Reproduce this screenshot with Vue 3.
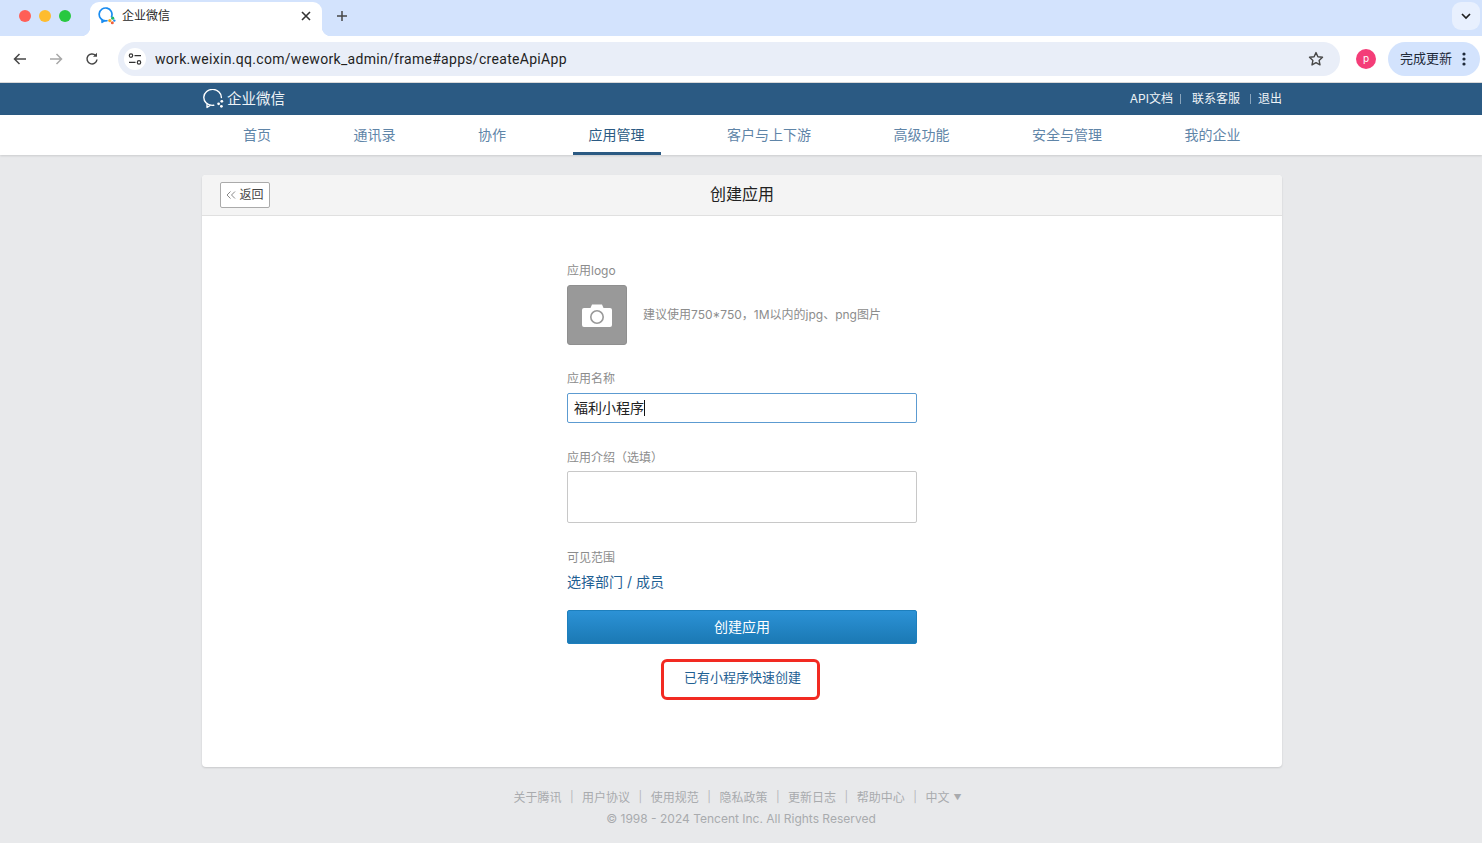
<script setup>
const navItems = ['首页', '通讯录', '协作', '应用管理', '客户与上下游', '高级功能', '安全与管理', '我的企业']
const footerLinks = ['关于腾讯', '用户协议', '使用规范', '隐私政策', '更新日志', '帮助中心']
</script>

<template>
  <div class="page">
    <div class="tabstrip">
      <div class="lights"><i class="l-red"></i><i class="l-yellow"></i><i class="l-green"></i></div>
      <div class="tab">
        <svg class="favicon" width="18" height="18" viewBox="0 0 18 18" fill="none">
          <path d="M13.6 9.600A6.400 6.400 0 1 0 7.600 13.800c.5 0 .9 0 1.300-.1" stroke="#1a8cf0" stroke-width="1.700" stroke-linecap="round"/>
          <path d="M4 12.300v3.200l2.800-1.900" stroke="#1a8cf0" stroke-width="1.500" stroke-linejoin="round"/>
          <circle cx="14.700" cy="11.200" r="1.600" fill="#20b86a"/>
          <circle cx="11.800" cy="13.600" r="1.600" fill="#f5a623"/>
          <circle cx="14.300" cy="15.800" r="1.500" fill="#f0603c"/>
          <circle cx="16.300" cy="13.600" r="1.200" fill="#1a8cf0"/>
        </svg>
        <span class="tab-title">企业微信</span>
        <svg class="tab-close" width="10" height="10" viewBox="0 0 10 10"><path d="M1 1l8 8M9 1l-8 8" stroke="#333" stroke-width="1.600"/></svg>
      </div>
      <svg class="plus" width="12" height="12" viewBox="0 0 12 12"><path d="M6 1v10M1 6h10" stroke="#474747" stroke-width="1.500"/></svg>
      <div class="tab-menu">
        <svg width="10" height="7" viewBox="0 0 10 7"><path d="M1 1l4 4 4-4" fill="none" stroke="#1f1f1f" stroke-width="1.700"/></svg>
      </div>
    </div>

    <div class="toolbar">
      <svg class="tool" width="16" height="16" viewBox="0 0 16 16" fill="none"><path d="M14 8H3M7.500 3L2.500 8l5 5" stroke="#474747" stroke-width="1.500"/></svg>
      <svg class="tool" width="16" height="16" viewBox="0 0 16 16" fill="none"><path d="M2 8h11M8.500 3l5 5-5 5" stroke="#a8a8a8" stroke-width="1.500"/></svg>
      <svg class="tool" width="16" height="16" viewBox="0 0 16 16" fill="none"><path d="M13 8.500A5 5 0 1 1 11.600 4.400" stroke="#474747" stroke-width="1.500"/><path d="M13 1.800v4h-4z" fill="#474747"/></svg>
      <div class="omnibox">
        <span class="tune">
          <svg width="14" height="12" viewBox="0 0 14 12" fill="none"><circle cx="3" cy="2.600" r="1.700" stroke="#333" stroke-width="1.200"/><path d="M6.500 2.600H13M1 9.400h6.500" stroke="#333" stroke-width="1.300"/><circle cx="11" cy="9.400" r="1.700" stroke="#333" stroke-width="1.200"/></svg>
        </span>
        <span class="url">work.weixin.qq.com/wework_admin/frame#apps/createApiApp</span>
        <svg class="star" width="16" height="16" viewBox="0 0 16 16" fill="none"><path d="M8 1.600l1.900 4.200 4.600.5-3.400 3.100.9 4.500L8 11.600l-4 2.300.9-4.500L1.500 6.300l4.600-.5z" stroke="#474747" stroke-width="1.400" stroke-linejoin="round"/></svg>
      </div>
      <span class="avatar">p</span>
      <div class="update">
        <span>完成更新</span>
        <svg width="4" height="14" viewBox="0 0 4 14"><circle cx="2" cy="2" r="1.600" fill="#1f2a3a"/><circle cx="2" cy="7" r="1.600" fill="#1f2a3a"/><circle cx="2" cy="12" r="1.600" fill="#1f2a3a"/></svg>
      </div>
    </div>

    <header class="topbar">
      <div class="topbar-inner">
        <div class="brand">
          <svg width="23" height="20" viewBox="0 0 23 20" fill="none">
            <path d="M19.400 8.600A8.800 8 0 1 0 10 16.400c.6 0 1.200 0 1.800-.1" stroke="#fff" stroke-width="1.400" stroke-linecap="round"/>
            <path d="M5 14.600v3.900l3.500-2.300" stroke="#fff" stroke-width="1.300" stroke-linejoin="round"/>
            <circle cx="19.800" cy="12.300" r="1.400" fill="#fff"/>
            <circle cx="16.600" cy="14.800" r="1.400" fill="#fff"/>
            <circle cx="19.400" cy="17.300" r="1.400" fill="#fff"/>
          </svg>
          <span>企业微信</span>
        </div>
        <div class="top-links">
          <span>API文档</span><i></i><span>联系客服</span><i class="wide"></i><span>退出</span>
        </div>
      </div>
    </header>

    <nav class="nav">
      <a v-for="item in navItems" :key="item" :class="{ active: item === '应用管理' }">{{ item }}</a>
    </nav>

    <main class="card">
      <div class="card-head">
        <button class="back">
          <svg width="10" height="8" viewBox="0 0 10 8" fill="none"><path d="M4.500.5L1 4l3.500 3.500M9 .5L5.500 4 9 7.500" stroke="#888" stroke-width="1"/></svg>
          <span>返回</span>
        </button>
        <h1>创建应用</h1>
      </div>
      <div class="form">
        <div class="label first">应用logo</div>
        <div class="logo-row">
          <div class="logo">
            <svg width="30" height="23" viewBox="0 0 30 23"><path fill-rule="evenodd" d="M2 4h6.500L10 .5h10L21.500 4H28a2 2 0 0 1 2 2v15a2 2 0 0 1-2 2H2a2 2 0 0 1-2-2V6a2 2 0 0 1 2-2zm13 2a7 7 0 1 0 0 14 7 7 0 0 0 0-14zm0 1.600a5.400 5.400 0 1 1 0 10.800 5.400 5.400 0 0 1 0-10.800z" fill="#fff"/></svg>
          </div>
          <span class="hint">建议使用750*750，1M以内的jpg、png图片</span>
        </div>
        <div class="label l-name">应用名称</div>
        <div class="input"><span>福利小程序</span><i class="caret"></i></div>
        <div class="label l-desc">应用介绍（选填）</div>
        <div class="textarea"></div>
        <div class="label l-scope">可见范围</div>
        <a class="select">选择部门 / 成员</a>
        <button class="submit">创建应用</button>
        <a class="quick">已有小程序快速创建</a>
      </div>
    </main>

    <footer class="footer">
      <div class="f-links">
        <template v-for="link in footerLinks" :key="link">
          <span>{{ link }}</span><b>|</b>
        </template>
        <span>中文</span><em>▼</em>
      </div>
      <div class="copy">© 1998 - 2024 Tencent Inc. All Rights Reserved</div>
    </footer>
  </div>
</template>

<style>
html, body { margin: 0; background: #e8e9eb; overflow: hidden; }
</style>

<style scoped>
.page {
  width: 1482px;
  height: 843px;
  overflow: hidden;
  background: #e8e9eb;
  font-family: "Inter", "Noto Sans CJK SC", sans-serif;
  line-height: 1.2;
  display: flex;
  flex-direction: column;
}
.tabstrip {
  height: 36px;
  flex: none;
  background: #d3e3fd;
  display: flex;
  align-items: flex-start;
  position: relative;
}
.lights { display: flex; gap: 8px; margin: 10px 0 0 19px; width: 71px; }
.lights i { width: 12px; height: 12px; border-radius: 50%; flex: none; }
.l-red { background: #ff5f57; }
.l-yellow { background: #febc2e; }
.l-green { background: #28c840; }
.tab {
  margin-top: 2px;
  width: 232px;
  height: 34px;
  background: #fff;
  border-radius: 9px 9px 0 0;
  display: flex;
  align-items: center;
  padding: 0 11px 6px 8px;
  box-sizing: border-box;
  position: relative;
}
.tab::before, .tab::after {
  content: "";
  position: absolute;
  bottom: 0;
  width: 9px;
  height: 9px;
}
.tab::before { left: -9px; background: radial-gradient(circle at 0 0, #d3e3fd 9px, #fff 9.500px); }
.tab::after { right: -9px; background: radial-gradient(circle at 100% 0, #d3e3fd 9px, #fff 9.500px); }
.tab-title { font-size: 12px; color: #1f1f1f; margin-left: 6px; flex: 1; }
.plus { margin: 10px 0 0 14px; }
.tab-menu {
  position: absolute;
  left: 1452px;
  top: 2px;
  width: 28px;
  height: 28px;
  border-radius: 9px;
  background: #e8f0fe;
  display: flex;
  align-items: center;
  justify-content: center;
}
.toolbar {
  height: 46px;
  flex: none;
  background: #fff;
  border-bottom: 1px solid #d9d9d9;
  display: flex;
  align-items: center;
  padding-left: 12px;
}
.tool { margin-right: 20px; flex: none; }
.tool:nth-child(3) { margin-right: 18px; }
.omnibox {
  width: 1222px;
  height: 34px;
  border-radius: 17px;
  background: #e9eef8;
  display: flex;
  align-items: center;
  padding: 0 16px 0 6px;
  box-sizing: border-box;
  flex: none;
}
.tune {
  width: 22px;
  height: 22px;
  border-radius: 50%;
  background: #fff;
  display: flex;
  align-items: center;
  justify-content: center;
  flex: none;
}
.url { font-size: 14px; color: #1f1f1f; margin-left: 9px; flex: 1; font-family: "Roboto", sans-serif; letter-spacing: .3px; }
.avatar {
  width: 20px;
  height: 20px;
  border-radius: 50%;
  background: #f43d78;
  color: #fff;
  font-size: 10px;
  line-height: 19px;
  text-align: center;
  margin-left: 16px;
  flex: none;
}
.update {
  width: 92px;
  height: 34px;
  margin-left: 12px;
  border-radius: 17px;
  background: #d3e3fd;
  display: flex;
  align-items: center;
  justify-content: space-between;
  padding: 0 14px 0 12px;
  box-sizing: border-box;
  font-size: 13px;
  color: #1f2a3a;
  flex: none;
}
.topbar { height: 32px; flex: none; background: #2b5a83; }
.topbar-inner {
  width: 1080px;
  height: 100%;
  margin-left: 202px;
  display: flex;
  align-items: center;
  justify-content: space-between;
  color: #fff;
}
.brand { display: flex; align-items: center; gap: 2px; font-size: 14.500px; color: #eef3f7; }
.top-links { display: flex; align-items: center; font-size: 12px; color: #eef3f7; }
.top-links i { width: 1px; height: 10px; background: #8aa5bd; margin: 0 11px 0 7px; }
.top-links i.wide { margin: 0 7px 0 10px; }
.nav {
  height: 40px;
  flex: none;
  background: #fff;
  box-shadow: 0 1px 2px rgba(0, 0, 0, .12);
  display: flex;
  gap: 50.500px;
  padding-left: 227px;
  box-sizing: border-box;
}
.nav a {
  padding: 0 16px;
  font-size: 14px;
  line-height: 39px;
  color: #5f85a8;
  height: 40px;
  box-sizing: border-box;
}
.nav a.active { color: #2b5a83; border-bottom: 3px solid #2b5a83; }
.card {
  width: 1080px;
  height: 592px;
  margin: 20px 0 0 202px;
  background: #fff;
  border-radius: 4px;
  box-shadow: 0 1px 2px rgba(0, 0, 0, .14);
  flex: none;
  overflow: hidden;
}
.card-head {
  height: 41px;
  box-sizing: border-box;
  background: #f4f4f4;
  border-bottom: 1px solid #e0e0e0;
  display: flex;
  align-items: center;
  justify-content: center;
  position: relative;
}
.card-head h1 { margin: 0; font-size: 16px; font-weight: 400; color: #222; }
.back {
  position: absolute;
  left: 18px;
  top: 7px;
  width: 50px;
  height: 26px;
  padding: 0;
  background: #fff;
  border: 1px solid #aaa;
  border-radius: 2px;
  display: flex;
  align-items: center;
  justify-content: center;
  gap: 3px;
  font: 12px/1.2 "Inter", "Noto Sans CJK SC", sans-serif;
  color: #444;
}
.form {
  width: 350px;
  margin: 0 auto;
  display: flex;
  flex-direction: column;
  align-items: flex-start;
}
.label { font-size: 12px; line-height: 16px; color: #8c8c8c; }
.first { margin-top: 47px; }
.logo-row { display: flex; align-items: center; margin-top: 6px; gap: 16px; }
.logo {
  width: 60px;
  height: 60px;
  background: #999;
  border: 1px solid #8f8f8f;
  border-radius: 3px;
  box-sizing: border-box;
  display: flex;
  align-items: center;
  justify-content: center;
}
.hint { font-size: 12px; color: #8c8c8c; }
.l-name { margin-top: 26px; }
.input {
  width: 350px;
  height: 30px;
  margin-top: 6px;
  border: 1px solid #5c9bd1;
  border-radius: 2px;
  box-sizing: border-box;
  padding-left: 6px;
  display: flex;
  align-items: center;
  font-size: 14px;
  color: #222;
}
.caret { width: 1px; height: 16px; background: #111; }
.l-desc { margin-top: 27px; }
.textarea {
  width: 350px;
  height: 52px;
  margin-top: 5px;
  border: 1px solid #c8c8c8;
  border-radius: 2px;
  box-sizing: border-box;
}
.l-scope { margin-top: 27px; }
.select { font-size: 14px; line-height: 20px; margin-top: 6px; color: #1f6093; }
.submit {
  width: 350px;
  height: 34px;
  margin-top: 18px;
  border: 1px solid #1d7fbd;
  border-radius: 2px;
  background: linear-gradient(#2c92d6, #1b79b4);
  color: #fff;
  font: 14px/1.2 "Inter", "Noto Sans CJK SC", sans-serif;
}
.quick {
  margin: 15px 0 0 94px;
  width: 159px;
  height: 41px;
  border: 3px solid #f22a22;
  border-radius: 6px;
  box-sizing: border-box;
  padding-left: 4px;
  text-align: center;
  line-height: 31px;
  font-size: 13px;
  color: #1f6093;
}
.footer { text-align: center; color: #a9abae; font-size: 12px; margin-top: 23px; }
.f-links { display: flex; justify-content: center; align-items: center; height: 16px; padding-right: 7px; }
.f-links b { font-weight: 400; width: 20.670px; text-align: center; color: #b5b7ba; font-size: 11px; flex: none; }
.f-links em { font-style: normal; font-size: 8px; margin-left: 4px; }
.copy { margin-top: 5px; line-height: 16px; }
</style>
